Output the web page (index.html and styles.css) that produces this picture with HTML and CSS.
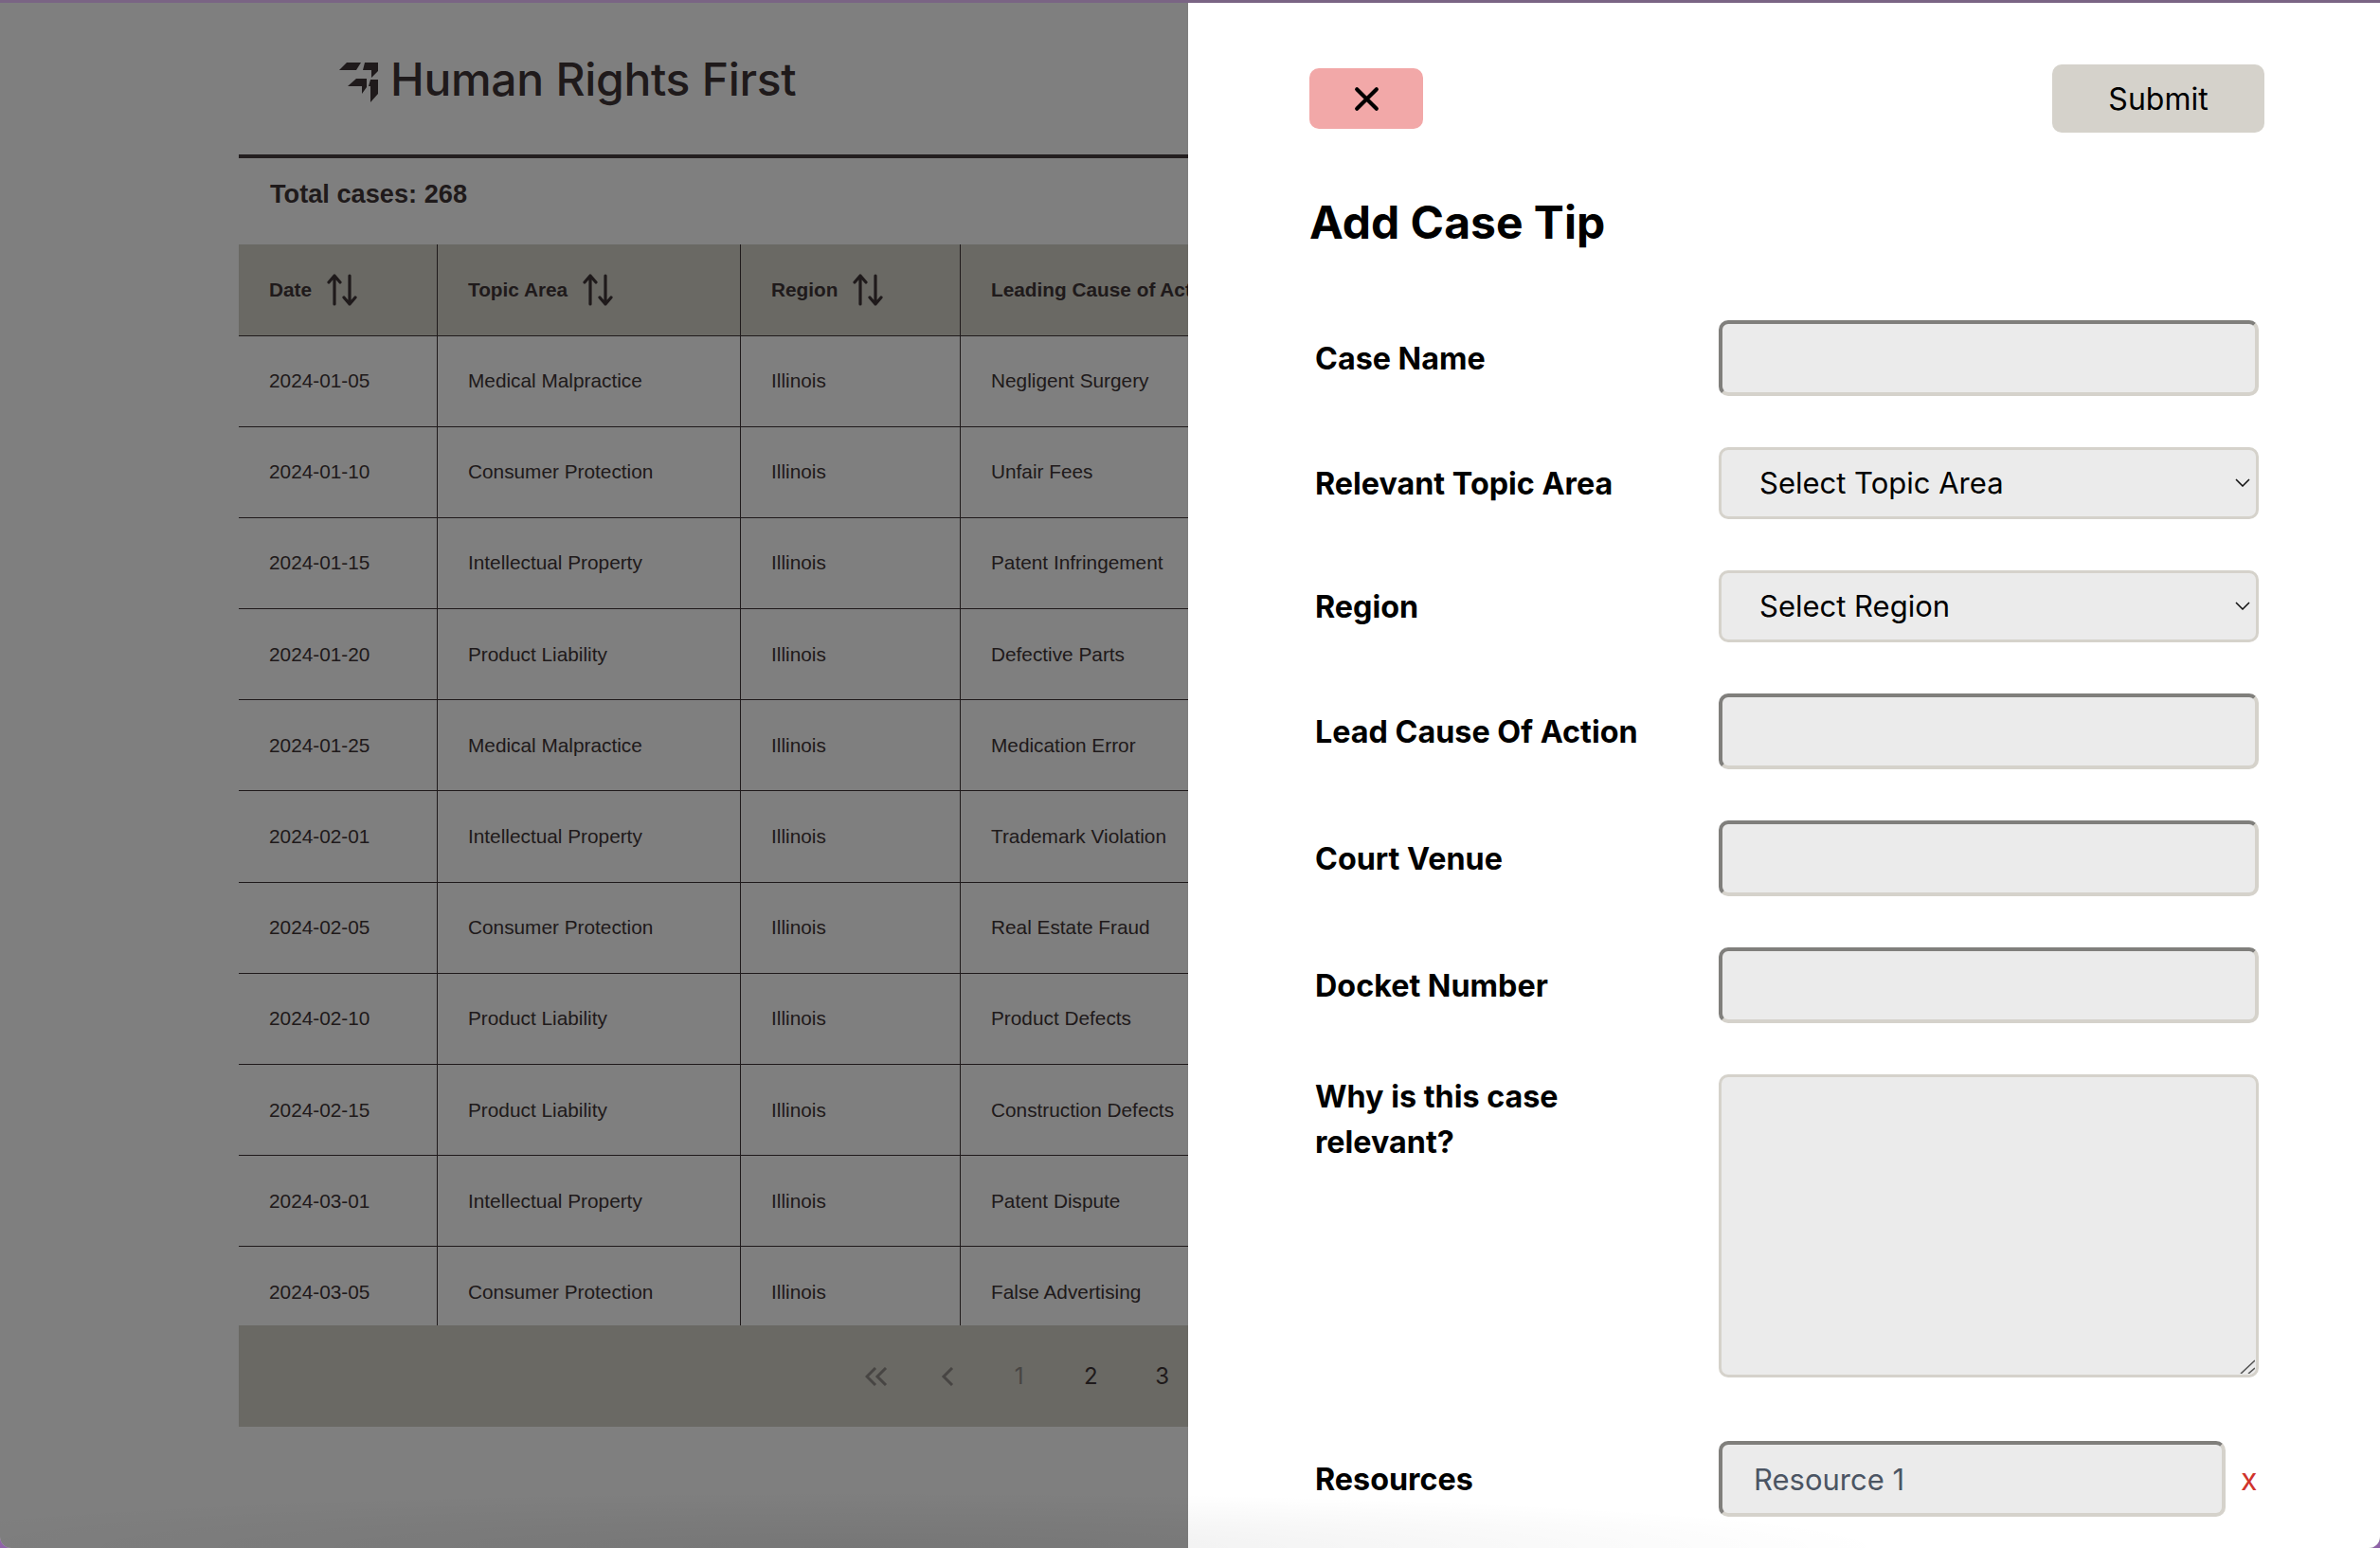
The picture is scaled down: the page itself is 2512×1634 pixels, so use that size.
FILE: index.html
```html
<!DOCTYPE html>
<html lang="en">
<head>
  <meta charset="UTF-8">
  <meta name="viewport" content="width=device-width, initial-scale=1.0">
  <title>Human Rights First</title>
  <link rel="stylesheet" href="styles.css">
</head>
<body>
  <div class="window">
    <main class="page">
      <header class="brand">
        <svg class="brand-mark" viewBox="0 0 41 42" aria-hidden="true">
          <path d="M0 8 L8 0 H23 L18 8 Z"/>
          <path d="M27 0 H41 V9 L34 16 V8 H25 Z"/>
          <path d="M9 25 L18 17 H29 V26 L24 33 V25 Z"/>
          <path d="M33 18 H41 V33 L33 42 V25 H31 Z"/>
        </svg>
        <span class="brand-name">Human Rights First</span>
      </header>
      <section class="cases">
        <p class="total">Total cases: 268</p>
        <div class="table-wrap">
          <table class="case-table">
            <thead>
              <tr>
                <th class="col-date"><span class="th-inner">Date <svg class="sort" viewBox="0 0 32 34" aria-hidden="true"><path d="M8 32 V2 M2 9 L8 2 L14 9 M24 2 V32 M18 25 L24 32 L30 25"/></svg></span></th>
                <th class="col-topic"><span class="th-inner">Topic Area <svg class="sort" viewBox="0 0 32 34" aria-hidden="true"><path d="M8 32 V2 M2 9 L8 2 L14 9 M24 2 V32 M18 25 L24 32 L30 25"/></svg></span></th>
                <th class="col-region"><span class="th-inner">Region <svg class="sort" viewBox="0 0 32 34" aria-hidden="true"><path d="M8 32 V2 M2 9 L8 2 L14 9 M24 2 V32 M18 25 L24 32 L30 25"/></svg></span></th>
                <th><span class="th-inner">Leading Cause of Action</span></th>
              </tr>
            </thead>
            <tbody>
              <tr><td>2024-01-05</td><td>Medical Malpractice</td><td>Illinois</td><td>Negligent Surgery</td></tr>
              <tr><td>2024-01-10</td><td>Consumer Protection</td><td>Illinois</td><td>Unfair Fees</td></tr>
              <tr><td>2024-01-15</td><td>Intellectual Property</td><td>Illinois</td><td>Patent Infringement</td></tr>
              <tr><td>2024-01-20</td><td>Product Liability</td><td>Illinois</td><td>Defective Parts</td></tr>
              <tr><td>2024-01-25</td><td>Medical Malpractice</td><td>Illinois</td><td>Medication Error</td></tr>
              <tr><td>2024-02-01</td><td>Intellectual Property</td><td>Illinois</td><td>Trademark Violation</td></tr>
              <tr><td>2024-02-05</td><td>Consumer Protection</td><td>Illinois</td><td>Real Estate Fraud</td></tr>
              <tr><td>2024-02-10</td><td>Product Liability</td><td>Illinois</td><td>Product Defects</td></tr>
              <tr><td>2024-02-15</td><td>Product Liability</td><td>Illinois</td><td>Construction Defects</td></tr>
              <tr><td>2024-03-01</td><td>Intellectual Property</td><td>Illinois</td><td>Patent Dispute</td></tr>
              <tr><td>2024-03-05</td><td>Consumer Protection</td><td>Illinois</td><td>False Advertising</td></tr>
            </tbody>
          </table>
        </div>
        <nav class="pager">
          <span class="pager-item is-off"><svg class="pager-icon" viewBox="0 0 24 20" aria-hidden="true"><path d="M11 1 L2 10 L11 19 M22 1 L13 10 L22 19"/></svg></span>
          <span class="pager-item is-off"><svg class="pager-icon" viewBox="0 0 24 20" aria-hidden="true"><path d="M17 1 L8 10 L17 19"/></svg></span>
          <span class="pager-item is-off">1</span>
          <span class="pager-item">2</span>
          <span class="pager-item">3</span>
        </nav>
      </section>
    </main>

    <div class="overlay"></div>

    <aside class="drawer">
      <div class="drawer-top">
        <button class="btn-close" aria-label="Close">
          <svg viewBox="0 0 24 24" aria-hidden="true"><path d="M4 4 L20 20 M20 4 L4 20"/></svg>
        </button>
        <button class="btn-submit">Submit</button>
      </div>
      <h2 class="drawer-title">Add Case Tip</h2>
      <form class="tip-form">
        <label class="field-label">Case Name</label>
        <input class="text-input" type="text">

        <label class="field-label">Relevant Topic Area</label>
        <div class="select-wrap">
          <select class="select-input"><option>Select Topic Area</option></select>
          <svg class="chevron" viewBox="0 0 16 9" aria-hidden="true"><path d="M1 1 L8 8 L15 1"/></svg>
        </div>

        <label class="field-label">Region</label>
        <div class="select-wrap">
          <select class="select-input"><option>Select Region</option></select>
          <svg class="chevron" viewBox="0 0 16 9" aria-hidden="true"><path d="M1 1 L8 8 L15 1"/></svg>
        </div>

        <label class="field-label">Lead Cause Of Action</label>
        <input class="text-input" type="text">

        <label class="field-label">Court Venue</label>
        <input class="text-input" type="text">

        <label class="field-label">Docket Number</label>
        <input class="text-input" type="text">

        <label class="field-label field-label-top">Why is this case relevant?</label>
        <div class="area-wrap">
          <textarea class="area-input"></textarea>
          <svg class="grip" viewBox="0 0 16 15" aria-hidden="true"><path d="M1 15 L16 1 M9 15 L16 9"/></svg>
        </div>

        <label class="field-label field-label-res">Resources</label>
        <div class="resource-row">
          <input class="text-input resource-input" type="text" value="Resource 1">
          <span class="resource-remove">x</span>
        </div>
      </form>
    </aside>

    <div class="dock-shade"></div>
  </div>
</body>
</html>
```

FILE: styles.css
```css
html {
  height: 100%;
  background: linear-gradient(#7a6484 0 3px, #8f63a8 3px);
}
body {
  margin: 0;
  height: 100%;
  overflow: hidden;
  font-family: "Liberation Sans", Arial, sans-serif;
  color: #3e3536;
}
.window {
  position: relative;
  height: 1631px;
  margin-top: 3px;
  border-radius: 0 0 12px 12px;
  overflow: hidden;
  background: #fff;
}
.page {
  padding: 0 252px;
}

/* logo */
.brand {
  display: flex;
  align-items: center;
  gap: 13px;
  height: 160px;
  padding-left: 106px;
  box-sizing: border-box;
}
.brand-mark {
  width: 41px;
  height: 42px;
  fill: #3e3536;
  margin-top: 8px;
}
.brand-name {
  font-family: Inter, "Liberation Sans", sans-serif;
  font-size: 48px;
  font-weight: 500;
  letter-spacing: -0.3px;
}

/* table */
.cases {
  border-top: 4px solid #463d3e;
}
.total {
  margin: 0;
  height: 91px;
  padding-left: 33px;
  font-size: 27.2px;
  font-weight: 700;
  line-height: 76px;
}
.table-wrap {
  height: 1141px;
  overflow: hidden;
}
.case-table {
  width: 100%;
  table-layout: fixed;
  border-collapse: collapse;
  font-size: 20.8px;
}
.case-table th,
.case-table td {
  padding: 0 32px;
  text-align: left;
  border-right: 1px solid #3e3536;
  border-bottom: 1px solid #3e3536;
}
.case-table th:last-child,
.case-table td:last-child {
  border-right: none;
}
.case-table thead tr {
  height: 96px;
  background: #d4d2c9;
}
.case-table tbody tr {
  height: 96.2px;
}
.col-date { width: 145px; }
.col-topic { width: 255px; }
.col-region { width: 167px; }
.th-inner {
  display: inline-flex;
  align-items: center;
  gap: 16px;
  white-space: nowrap;
}
.sort {
  width: 32px;
  height: 34px;
  fill: none;
  stroke: #3e3536;
  stroke-width: 3.2;
  stroke-linecap: round;
  stroke-linejoin: round;
}

.pager {
  display: flex;
  align-items: center;
  height: 107px;
  padding-left: 635px;
  background: #d4d2c9;
  font-size: 24px;
}
.pager-item {
  display: flex;
  justify-content: center;
  align-items: center;
  width: 75.5px;
  font-family: Inter, "Liberation Sans", sans-serif;
}
.is-off {
  color: #8f8a86;
}
.pager-icon {
  width: 24px;
  height: 20px;
  fill: none;
  stroke: #8f8a86;
  stroke-width: 3;
}

.overlay {
  position: absolute;
  inset: 0;
  background: rgba(0, 0, 0, 0.5);
}

/* drawer */
.drawer {
  position: absolute;
  top: 0;
  right: 0;
  bottom: 0;
  width: 1258px;
  box-sizing: border-box;
  padding: 65px 122px 0 128px;
  background: #fff;
  color: #000;
  font-family: Inter, "Liberation Sans", sans-serif;
}
.drawer-top {
  display: flex;
  justify-content: space-between;
  align-items: center;
}
.btn-close {
  display: flex;
  justify-content: center;
  align-items: center;
  width: 120px;
  height: 64px;
  border: none;
  border-radius: 10px;
  background: #f2a8a8;
}
.btn-close svg {
  width: 31px;
  height: 31px;
  fill: none;
  stroke: #000;
  stroke-width: 3.2;
  stroke-linecap: round;
}
.btn-submit {
  width: 224px;
  height: 72px;
  border: none;
  border-radius: 10px;
  background: #d5d2cb;
  color: #000;
  font-family: inherit;
  font-size: 32px;
}
.drawer-title {
  margin: 66px 0 0;
  font-size: 48px;
  font-weight: 700;
  line-height: 58px;
}
.tip-form {
  display: grid;
  grid-template-columns: 426px 1fr;
  row-gap: 54.2px;
  margin: 74px 6px 0;
}
.field-label {
  align-self: center;
  padding-top: 2px;
  font-size: 32.3px;
  font-weight: 700;
  line-height: 48px;
}
.field-label-top {
  align-self: start;
  width: 320px;
  padding-top: 0;
}
.field-label-res {
  margin-top: 12.6px;
}
.text-input,
.select-input,
.area-input {
  width: 100%;
  box-sizing: border-box;
  margin: 0;
  background: #ebebeb;
  border-radius: 10px;
  font-family: inherit;
  font-size: 31px;
  outline: none;
}
.text-input {
  height: 80px;
  padding: 0 33px;
  border: 4px solid;
  border-color: #807f7c #d5d2cb #d5d2cb #807f7c;
  color: #4b5563;
}
.select-wrap,
.area-wrap {
  position: relative;
}
.select-input {
  display: block;
  height: 75.6px;
  padding: 0 40px;
  border: 3px solid #d5d2cb;
  color: #000;
  appearance: none;
}
.chevron {
  position: absolute;
  top: 33px;
  right: 9px;
  width: 16px;
  height: 9px;
  fill: none;
  stroke: #111;
  stroke-width: 1.5;
}
.area-input {
  display: block;
  height: 320px;
  border: 3px solid #d5d2cb;
  resize: none;
}
.grip {
  position: absolute;
  right: 4px;
  bottom: 4px;
  width: 16px;
  height: 15px;
  fill: none;
  stroke: #555;
  stroke-width: 1.6;
}
.resource-row {
  display: flex;
  align-items: center;
  gap: 16px;
  margin-top: 12.6px;
}
.resource-input {
  width: 535px;
}
.resource-remove {
  color: #d0342c;
  font-size: 32px;
}

/* faint shade the dock throws on the bottom edge */
.dock-shade {
  position: absolute;
  left: 0;
  right: 0;
  bottom: 0;
  height: 60px;
  pointer-events: none;
  background: radial-gradient(ellipse 1100px 60px at 900px 100%, rgba(0, 0, 0, 0.07), transparent);
}
```
